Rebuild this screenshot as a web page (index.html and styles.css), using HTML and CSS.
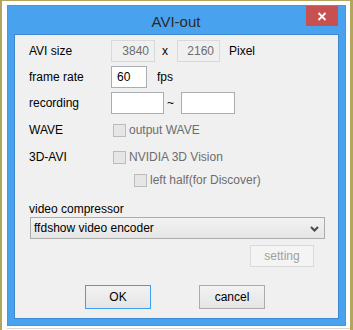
FILE: index.html
```html
<!DOCTYPE html>
<html>
<head>
<meta charset="utf-8">
<title>AVI-out</title>
<link rel="stylesheet" href="styles.css">
</head>
<body>
<div class="screen">
  <div class="window">
    <div class="titlebar">
      <span class="title">AVI-out</span>
      <div class="close">
        <svg width="10" height="9" viewBox="0 0 10 9"><path d="M1.5 1 L8.5 8 M8.5 1 L1.5 8" stroke="#fff" stroke-width="1.8" fill="none"/></svg>
      </div>
    </div>
    <div class="client">
      <div class="row r1">
        <span class="label">AVI size</span>
        <div class="edit disabled w44">3840</div>
        <span class="sx">x</span>
        <div class="edit disabled w43">2160</div>
        <span class="unit">Pixel</span>
      </div>
      <div class="row r2">
        <span class="label">frame rate</span>
        <div class="edit white w36">60</div>
        <span class="fps">fps</span>
      </div>
      <div class="row r3">
        <span class="label">recording</span>
        <div class="edit white w53"></div>
        <span class="tilde">~</span>
        <div class="edit white w54"></div>
      </div>
      <div class="row chk r4">
        <span class="label">WAVE</span>
        <span class="box"></span><span class="dis">output WAVE</span>
      </div>
      <div class="row chk r5">
        <span class="label">3D-AVI</span>
        <span class="box"></span><span class="dis">NVIDIA 3D Vision</span>
      </div>
      <div class="row chk r6">
        <span class="label"></span>
        <span class="box indent"></span><span class="dis">left half(for Discover)</span>
      </div>
      <div class="row r7"><span>video compressor</span></div>
      <div class="row r8">
        <div class="select">
          <span>ffdshow video encoder</span>
          <svg width="9" height="6" viewBox="0 0 9 6"><path d="M1 1 L4.5 4.5 L8 1" stroke="#4a4a4a" stroke-width="2" fill="none"/></svg>
        </div>
      </div>
      <div class="row r9"><div class="btn setting">setting</div></div>
      <div class="row r10">
        <div class="btn ok">OK</div>
        <div class="btn cancel">cancel</div>
      </div>
    </div>
  </div>
  <div class="ground"></div>
</div>
</body>
</html>
```
FILE: styles.css
```css
* { box-sizing: border-box; }
html, body { margin: 0; padding: 0; background: #fff; }
body { font-family: "Liberation Sans", Arial, sans-serif; font-size: 12px; color: #000; }

.screen {
  width: 353px; height: 330px; overflow: hidden;
  border-left: 2px solid #b3a55d;
  border-right: 3px solid #b3a55d;
  border-top: 1px solid #b3a55d;
  padding: 4px 0 0 5px;
  background: #fff;
}
.window {
  position: relative;
  width: 339px; height: 321px;
  border: 1px solid #6a8db3;
  background: #49a2ee;
  display: flex; flex-direction: column;
}
.titlebar {
  height: 28px;
  display: flex; align-items: center; justify-content: center;
}
.title { font-size: 15px; color: #2b2b2b; padding-top: 2px; padding-right: 1px; }
.close {
  position: absolute; left: 298px; top: 0;
  width: 32px; height: 20px;
  background: #c75050;
  display: flex; align-items: center; justify-content: center;
}
.client {
  margin: 0 6px;
  height: 285px;
  border: 1px solid #3e88d2;
  background: #f0f0f0;
  padding: 5px 0 0 14px;
}
.row { display: flex; align-items: center; height: 22px; white-space: nowrap; }
.label { width: 82px; flex: none; }
.r1 { margin-bottom: 4px; }
.r2 { margin-bottom: 4px; }
.edit { height: 22px; line-height: 20px; border: 1px solid #abadb3; background: #fff; padding: 0 5px; }
.edit.disabled { border-color: #d9d9d9; background: #f0f0f0; color: #6d6d6d; text-align: right; padding-right: 5px; }
.w44 { width: 44px; } .w43 { width: 43px; } .w36 { width: 36px; } .w53 { width: 53px; } .w54 { width: 54px; }
.sx { margin: 0 9px 0 7px; }
.unit { margin-left: 9px; }
.fps { margin-left: 10px; }
.tilde { margin: 0 7px 0 3px; }

.chk { height: 20px; }
.r4 { margin-top: 6px; }
.r5 { margin-top: 7px; }
.r6 { margin-top: 3px; }
.box { width: 13px; height: 13px; border: 1px solid #bcbcbc; background: #e6e6e6; margin-left: 2px; margin-right: 3px; flex: none; }
.box.indent { margin-left: 23px; }
.dis { color: #6d6d6d; }

.r7 { height: 14px; margin-top: 12px; }
.r8 { margin-top: 1px; }
.select {
  margin-left: 1px; width: 295px; height: 22px;
  border: 1px solid #acacac;
  background: linear-gradient(#f2f2f2, #e6e6e6);
  display: flex; align-items: center; justify-content: space-between;
  padding: 0 5px 0 3px;
}
.select svg { margin-top: 1px; }
.r9 { margin-top: 6px; }
.btn { display: flex; align-items: center; justify-content: center; }
.setting {
  margin-left: 221px; width: 64px; height: 22px;
  border: 1px solid #d9d9d9; background: #f4f4f4; color: #a0a0a0;
}
.r10 { margin-top: 18px; height: 24px; }
.ok, .cancel {
  width: 66px; height: 24px;
  background: linear-gradient(#f2f2f2, #e5e5e5);
}
.ok { margin-left: 56px; border: 1px solid #3d9ff0; }
.cancel { margin-left: 48px; border: 1px solid #acacac; }
.ground { margin-top: 2px; border-top: 1px solid #d8d8d8; width: 343px; }
```
